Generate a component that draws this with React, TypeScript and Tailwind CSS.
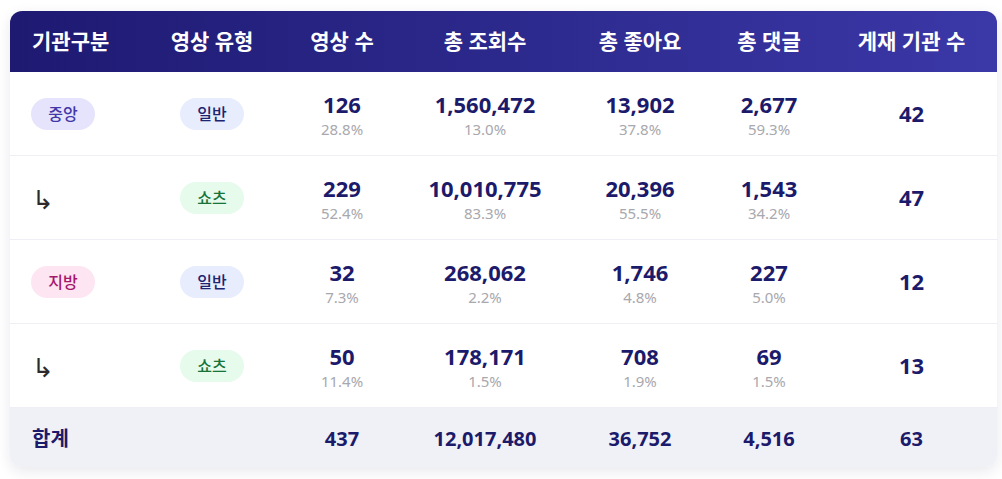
import React from "react";

type Row = {
  org?: { label: string; cls: string };
  type: { label: string; cls: string };
  values: [string, string][];
  outlets: string;
};

const GENERAL = { label: "일반", cls: "bg-[#e7edfd] text-[#1d2470]" };
const SHORTS = { label: "쇼츠", cls: "bg-[#e6fbeb] text-[#16733a]" };

const rows: Row[] = [
  {
    org: { label: "중앙", cls: "bg-[#e6e4fc] text-[#4338a8]" },
    type: GENERAL,
    values: [
      ["126", "28.8%"],
      ["1,560,472", "13.0%"],
      ["13,902", "37.8%"],
      ["2,677", "59.3%"],
    ],
    outlets: "42",
  },
  {
    type: SHORTS,
    values: [
      ["229", "52.4%"],
      ["10,010,775", "83.3%"],
      ["20,396", "55.5%"],
      ["1,543", "34.2%"],
    ],
    outlets: "47",
  },
  {
    org: { label: "지방", cls: "bg-[#fde5f2] text-[#a3176c]" },
    type: GENERAL,
    values: [
      ["32", "7.3%"],
      ["268,062", "2.2%"],
      ["1,746", "4.8%"],
      ["227", "5.0%"],
    ],
    outlets: "12",
  },
  {
    type: SHORTS,
    values: [
      ["50", "11.4%"],
      ["178,171", "1.5%"],
      ["708", "1.9%"],
      ["69", "1.5%"],
    ],
    outlets: "13",
  },
];

const headers = ["영상 유형", "영상 수", "총 조회수", "총 좋아요", "총 댓글", "게재 기관 수"];
const cols = "grid grid-cols-[132px_140px_120px_166px_144px_114px_171px]";

const Badge = ({ label, cls }: { label: string; cls: string }) => (
  <span className={`inline-flex h-8 w-16 items-center justify-center rounded-full text-[16px] font-medium ${cls}`}>
    {label}
  </span>
);

export default function App() {
  return (
    <div className="min-h-screen bg-white pl-[10px] pt-[11px] font-['Noto_Sans','Noto_Sans_CJK_KR',sans-serif]">
      <div className="w-[987px] overflow-hidden rounded-xl bg-white shadow-[0_4px_14px_rgba(30,30,80,0.10)]">
        {/* header */}
        <div className={`${cols} h-[61px] items-center bg-gradient-to-r from-[#1e1a72] to-[#3b38a8] text-[21px] font-bold text-white`}>
          <div className="pl-[22px]">기관구분</div>
          {headers.map((h) => (
            <div key={h} className="text-center">
              {h}
            </div>
          ))}
        </div>

        {/* body */}
        {rows.map((r, i) => (
          <div key={i} className={`${cols} h-[84px] items-center border-b border-[#eeeff4]`}>
            <div className="pl-[21px]">
              {r.org ? (
                <Badge {...r.org} />
              ) : (
                <span className="inline-block pl-[1px] pt-[4px] font-['Noto_Sans_CJK_KR',sans-serif] text-[26px] font-medium leading-none text-[#2e2a2a]">↳</span>
              )}
            </div>
            <div className="flex justify-center">
              <Badge {...r.type} />
            </div>
            {r.values.map(([v, p], j) => (
              <div key={j} className="flex flex-col items-center">
                <span className="text-[22px] font-bold leading-[30px] text-[#1c1a6a]">{v}</span>
                <span className="text-[15px] leading-[20px] text-[#a8a8ae]">{p}</span>
              </div>
            ))}
            <div className="text-center text-[22px] font-bold text-[#1c1a6a]">{r.outlets}</div>
          </div>
        ))}

        {/* total */}
        <div className={`${cols} h-[59px] items-center bg-[#f0f1f7] pt-[2px] text-[20px] font-bold text-[#1c1a6a]`}>
          <div className="pl-[22px]">합계</div>
          <div />
          <div className="text-center">437</div>
          <div className="text-center">12,017,480</div>
          <div className="text-center">36,752</div>
          <div className="text-center">4,516</div>
          <div className="text-center">63</div>
        </div>
      </div>
    </div>
  );
}
